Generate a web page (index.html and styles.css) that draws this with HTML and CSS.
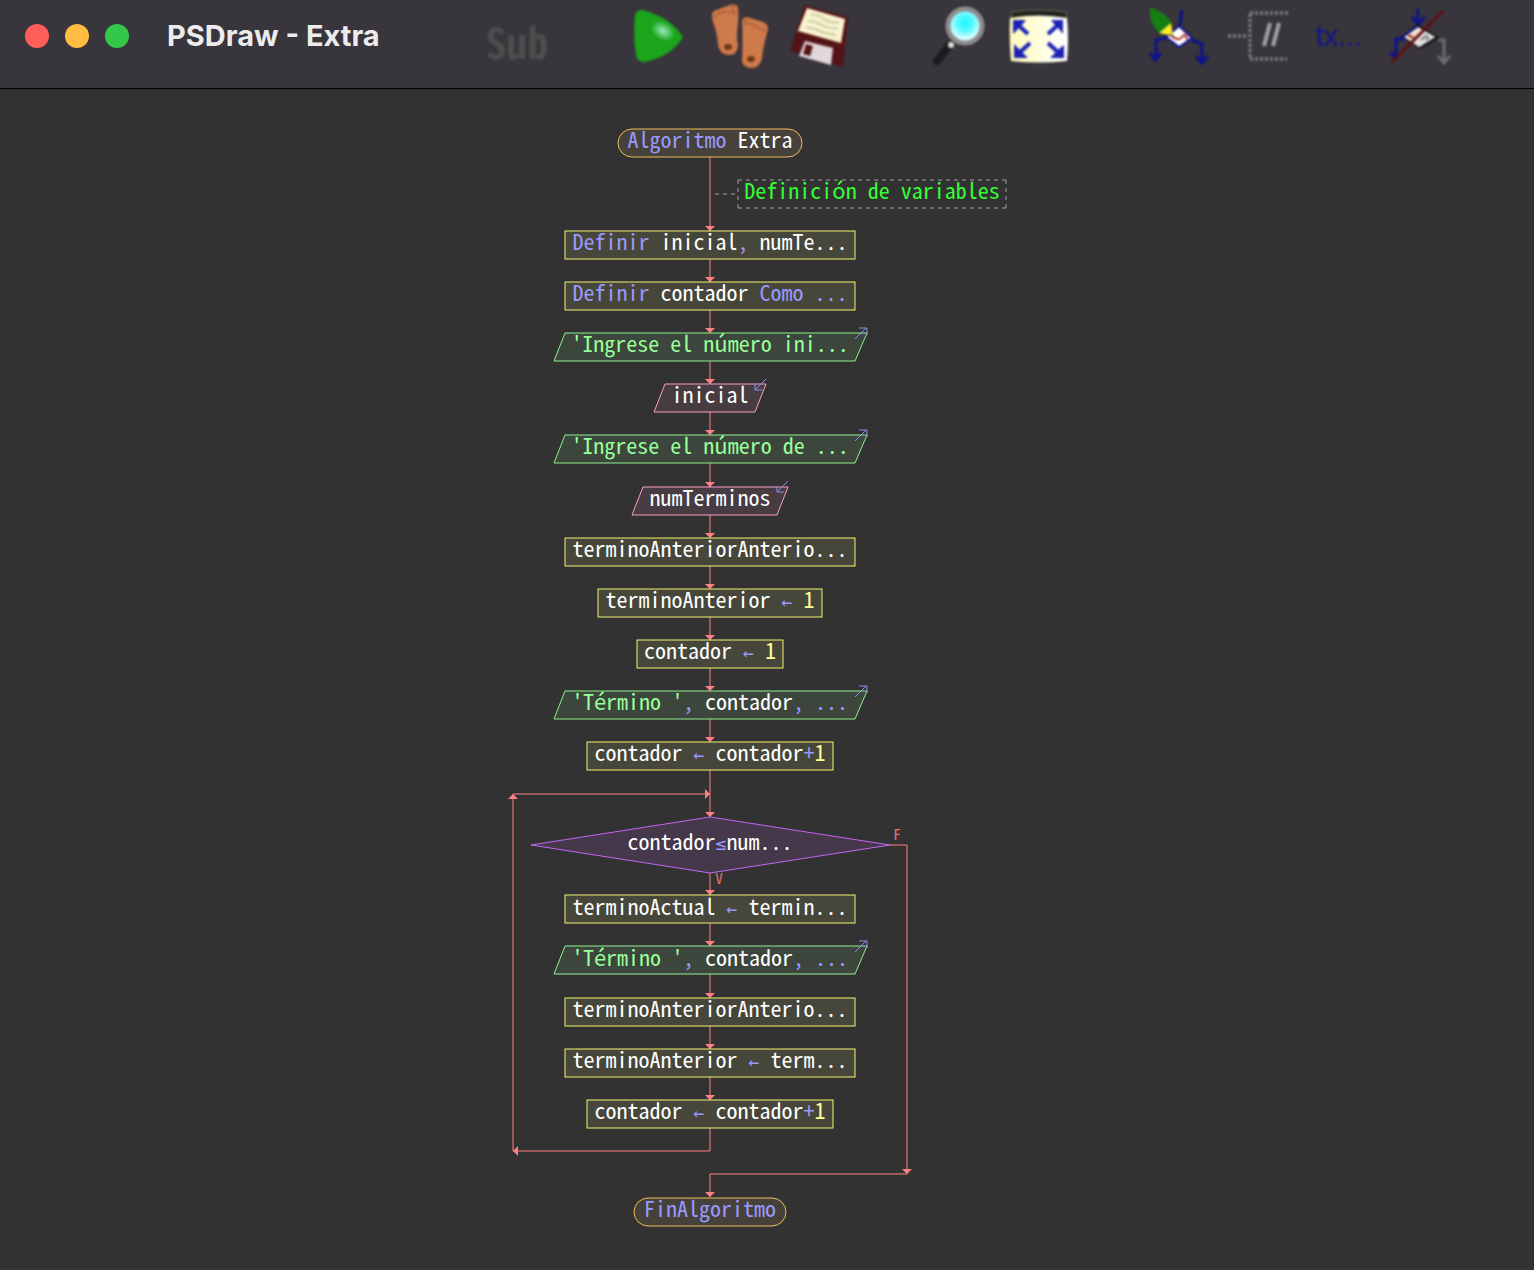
FILE: index.html
```html
<!DOCTYPE html>
<html lang="es">
<head>
<meta charset="utf-8">
<title>PSDraw - Extra</title>
<link rel="stylesheet" href="styles.css">
</head>
<body>
<header class="titlebar">
  <div class="caption">
    <span class="light close"></span>
    <span class="light minimize"></span>
    <span class="light expand"></span>
    <h1 class="title">PSDraw - Extra</h1>
  </div>
  <nav class="toolbar">
    <div class="group">
      <button class="tool tool-sub" type="button">Sub</button>
    </div>
    <div class="group">
      <button class="tool" type="button" aria-label="Ejecutar">
        <svg class="icon" viewBox="0 0 80 80">
          <defs><radialGradient id="shine"><stop offset="0" stop-color="#98ecc0"/><stop offset="1" stop-color="#1ba51b"/></radialGradient></defs>
          <path fill="#1ba51b" d="M18 16Q19 9 26 10Q54 18 66 37Q54 57 27 62Q20 62 19 55Q16 36 18 16Z"/>
          <ellipse cx="46" cy="31" rx="13" ry="9" transform="rotate(30 46 31)" fill="url(#shine)"/>
        </svg>
      </button>
      <button class="tool" type="button" aria-label="Paso a paso">
        <svg class="icon" viewBox="0 0 80 80">
          <g fill="#cf7a4a">
            <path d="M15 17Q14 11 20 10Q26 7 33 5Q38 3 41 7Q42 16 41 25Q39 35 41 45Q41 55 31 55Q22 54 21 44Q20 32 16 22Z"/>
            <path d="M45 21Q47 15 53 18L63 21Q72 23 71 30Q67 42 65 58Q63 68 54 68Q45 67 45 60Q46 40 45 21Z"/>
          </g>
          <path fill="none" stroke="#a05a36" stroke-width="2" stroke-dasharray="3 2" d="M17 17Q22 12 28 12T39 13M47 24Q52 23 58 26T70 32M36 5V12M49 19V23"/>
          <ellipse cx="31" cy="47" rx="4" ry="3" fill="#713716"/><ellipse cx="54" cy="59" rx="4" ry="3" fill="#713716"/>
        </svg>
      </button>
      <button class="tool" type="button" aria-label="Guardar">
        <svg class="icon" viewBox="0 0 80 80">
          <path fill="#541417" d="M28 5L71 17L66 67L13 51Z"/>
          <path fill="#fbf2cf" d="M30 8L68 19L64 43L21 31Z"/>
          <path fill="none" stroke="#c3cfa4" stroke-width="2" d="M34 15Q40 14 47 19T62 22M31 21Q38 21 45 25T61 28M29 27Q37 28 43 31T59 35"/>
          <path fill="#e0d8dc" d="M28 41L56 48L54 65L22 56Z"/>
          <path fill="#541417" d="M29 44L36 46L33 56L26 54Z"/>
        </svg>
      </button>
    </div>
    <div class="group">
      <button class="tool" type="button" aria-label="Zoom">
        <svg class="icon" viewBox="0 0 80 80">
          <defs><radialGradient id="lens" cy="0.4"><stop offset="0" stop-color="#20f4ff"/><stop offset="0.5" stop-color="#5cfaff"/><stop offset="1" stop-color="#e6ffff"/></radialGradient></defs>
          <path stroke="#1b1b1b" stroke-width="8" stroke-linecap="round" d="M32 46L20 61"/>
          <circle cx="48" cy="26" r="17" fill="url(#lens)" stroke="#8e8e8e" stroke-width="5"/>
          <circle cx="34" cy="45" r="3" fill="#e0e0e0"/>
        </svg>
      </button>
      <button class="tool" type="button" aria-label="Ajustar a la ventana">
        <svg class="icon" viewBox="0 0 80 80">
          <defs><linearGradient id="paper"><stop offset="0" stop-color="#fffbb8"/><stop offset="1" stop-color="#fff"/></linearGradient></defs>
          <path fill="#23231f" stroke="#6f6d52" d="M15 12Q42 8 69 12L70 20H14Z"/>
          <path fill="url(#paper)" d="M13 18Q42 13 70 18Q72 40 70 61Q42 64 14 61Q12 40 13 18Z"/>
          <g fill="#1c22b4" stroke="#1c22b4" stroke-width="4">
            <path d="M31 34L20 24M51 34L62 24M33 43L21 54M51 43L63 54"/>
            <path stroke="none" d="M16 20H29L25 25L21 29L16 34ZM66 20H54L58 25L62 29L66 34ZM17 58V44L22 49L26 53L31 58ZM67 58V45L62 49L58 53L53 58Z"/>
          </g>
        </svg>
      </button>
    </div>
    <div class="group">
      <button class="tool" type="button" aria-label="Editar diagrama">
        <svg class="icon" viewBox="0 0 80 80">
          <path fill="none" stroke="#0c1290" stroke-width="3" d="M45 10L43 25M29 38L19 40V58M55 40L65 44V62M13 53L18 60L24 53M59 56L65 63L71 56"/>
          <path fill="#fff" stroke="#0c1290" stroke-width="2" d="M42 26L55 38L42 47L29 37Z"/>
          <path fill="none" stroke="#b02525" stroke-width="2" d="M35 36Q41 42 45 37T50 40"/>
          <path fill="#148014" d="M13 7Q30 13 35 24L22 33Q11 22 13 7Z"/>
          <path fill="#fdf028" d="M22 33L34 23L36 36Z"/><path fill="#4a3000" d="M32 33L38 37L34 37Z"/>
        </svg>
      </button>
      <button class="tool" type="button" aria-label="Mostrar comentarios">
        <svg class="icon" viewBox="0 0 80 80">
          <path fill="none" stroke="#858585" stroke-width="3" stroke-dasharray="3 2" d="M11 36H31M33 13H71M33 14V59M33 59H70"/>
          <path stroke="#a2a2a2" stroke-width="4" d="M47 46L53 23M56 46L62 23"/>
        </svg>
      </button>
      <button class="tool tool-text" type="button">tx...</button>
      <button class="tool" type="button" aria-label="Estilo de diagrama">
        <svg class="icon" viewBox="0 0 80 80">
          <path fill="none" stroke="#0c1290" stroke-width="3" d="M41 9V24M35 17L41 24L48 17M26 39H19V56M13 52L18 58"/>
          <path fill="none" stroke="#6c6c6c" stroke-width="3" d="M61 40H67V62M61 56L67 63L73 56"/>
          <path fill="#16161c" d="M41 24L63 38L43 49L24 37Z"/>
          <path fill="#f1e3cf" d="M41 27L58 37L42 47L27 37Z"/>
          <path fill="#e2e2e2" d="M45 30L58 37L42 47L38 43Z"/>
          <path fill="none" stroke="#77777a" stroke-width="2" d="M44 40L50 35M49 40L52 37"/>
          <path fill="none" stroke="#0c1290" stroke-width="2" d="M41 26L25 37L29 40"/>
          <path fill="none" stroke="#9a3828" stroke-width="2" d="M31 35L37 38"/>
          <path stroke="#650d12" stroke-width="3" d="M15 62L66 11"/>
        </svg>
      </button>
    </div>
  </nav>
</header>

<main class="canvas">
  <svg class="chart" width="734" height="1176" viewBox="-310 0 734 1176">
    <defs>
      <marker id="head" markerUnits="userSpaceOnUse" markerWidth="5" markerHeight="10" refX="5" refY="5" orient="auto">
        <path class="head" d="M0 0L5 5L0 10Z"/>
      </marker>
      <path id="out" class="io" d="M0 12L11 1M4 1H12V8"/>
      <path id="in" class="io" d="M12 0L1 11M1 5V11H8"/>
    </defs>

    <!-- connectors of the main trunk -->
    <g class="flow">
      <path d="M0 68V142"/><path d="M0 170V193"/><path d="M0 221V244"/><path d="M0 272V295"/>
      <path d="M0 323V346"/><path d="M0 374V398"/><path d="M0 426V449"/><path d="M0 477V500"/>
      <path d="M0 528V551"/><path d="M0 579V602"/><path d="M0 630V653"/><path d="M0 681V728"/>
    </g>
    <!-- loop body, way back and way out -->
    <g class="flow">
      <path d="M0 784V806"/><path d="M0 834V857"/><path d="M0 885V909"/><path d="M0 937V960"/><path d="M0 988V1011"/>
      <path d="M0 1039V1062H-197"/><path d="M-197 1062V705"/><path d="M-197 705H0"/>
      <path d="M180 756H197V1085"/><path d="M197 1085H0V1108"/>
    </g>

    <rect class="limit" x="-92" y="40" width="184" height="28" rx="14"/>
    <text class="code" x="0" y="59"><tspan class="kw">Algoritmo</tspan> Extra</text>

    <path class="note" d="M5 105H28M28 91H296M28 91V119M28 119H296M296 91V119"/>
    <text class="code remark" x="162" y="110">Definición de variables</text>

    <rect class="step" x="-145" y="142" width="290" height="28"/>
    <text class="code" x="0" y="161"><tspan class="kw">Definir</tspan> inicial<tspan class="kw">,</tspan> numTe...</text>

    <rect class="step" x="-145" y="193" width="290" height="28"/>
    <text class="code" x="0" y="212"><tspan class="kw">Definir</tspan> contador <tspan class="kw">Como ...</tspan></text>

    <path class="write" d="M-145 244H157L145 272H-156Z"/><use href="#out" x="145" y="238"/>
    <text class="code str" x="0" y="263">'Ingrese el número ini...</text>

    <path class="read" d="M-45 295H56L45 323H-56Z"/><use href="#in" x="44" y="290"/>
    <text class="code" x="0" y="314">inicial</text>

    <path class="write" d="M-145 346H157L145 374H-156Z"/><use href="#out" x="145" y="340"/>
    <text class="code str" x="0" y="365">'Ingrese el número de ...</text>

    <path class="read" d="M-67 398H78L67 426H-78Z"/><use href="#in" x="66" y="392"/>
    <text class="code" x="0" y="417">numTerminos</text>

    <rect class="step" x="-145" y="449" width="290" height="28"/>
    <text class="code" x="0" y="468">terminoAnteriorAnterio...</text>

    <rect class="step" x="-112" y="500" width="224" height="28"/>
    <text class="code" x="0" y="519">terminoAnterior <tspan class="op">←</tspan> <tspan class="num">1</tspan></text>

    <rect class="step" x="-73" y="551" width="146" height="28"/>
    <text class="code" x="0" y="570">contador <tspan class="op">←</tspan> <tspan class="num">1</tspan></text>

    <path class="write" d="M-145 602H157L145 630H-156Z"/><use href="#out" x="145" y="596"/>
    <text class="code" x="0" y="621"><tspan class="str">'Término '</tspan><tspan class="kw">,</tspan> contador<tspan class="kw">, ...</tspan></text>

    <rect class="step" x="-123" y="653" width="246" height="28"/>
    <text class="code" x="0" y="672">contador <tspan class="op">←</tspan> contador<tspan class="kw">+</tspan><tspan class="num">1</tspan></text>

    <path class="test" d="M-179 756L0 728L180 756L0 784Z"/>
    <text class="code" x="0" y="761">contador<tspan class="op">≤</tspan>num...</text>
    <text class="branch" x="187" y="751">F</text>
    <text class="branch" x="9" y="795">V</text>

    <rect class="step" x="-145" y="806" width="290" height="28"/>
    <text class="code" x="0" y="826">terminoActual <tspan class="op">←</tspan> termin...</text>

    <path class="write" d="M-145 857H157L145 885H-156Z"/><use href="#out" x="145" y="851"/>
    <text class="code" x="0" y="877"><tspan class="str">'Término '</tspan><tspan class="kw">,</tspan> contador<tspan class="kw">, ...</tspan></text>

    <rect class="step" x="-145" y="909" width="290" height="28"/>
    <text class="code" x="0" y="928">terminoAnteriorAnterio...</text>

    <rect class="step" x="-145" y="960" width="290" height="28"/>
    <text class="code" x="0" y="979">terminoAnterior <tspan class="op">←</tspan> term...</text>

    <rect class="step" x="-123" y="1011" width="246" height="28"/>
    <text class="code" x="0" y="1030">contador <tspan class="op">←</tspan> contador<tspan class="kw">+</tspan><tspan class="num">1</tspan></text>

    <rect class="limit" x="-76" y="1109" width="152" height="28" rx="14"/>
    <text class="code kw" x="0" y="1128">FinAlgoritmo</text>
  </svg>
</main>
</body>
</html>
```

FILE: styles.css
```css
* { box-sizing: border-box; }

body {
  margin: 0;
  min-height: 100vh;
  display: flex;
  flex-direction: column;
  background: #323232;
  font-family: Inter, "Liberation Sans", sans-serif;
}

.titlebar {
  display: flex;
  height: 89px;
  background: #38353c;
  border-bottom: 1px solid #000;
}

.caption {
  flex: none;
  width: 477px;
  height: 72px;
  padding-left: 25px;
  display: flex;
  align-items: center;
  gap: 16px;
}

.light {
  width: 24px;
  height: 24px;
  border-radius: 50%;
}
.close { background: #ff5f5a; }
.minimize { background: #ffbc40; }
.expand { background: #34c84a; }

.title {
  margin: 0 0 0 22px;
  font-size: 29px;
  line-height: 36px;
  font-weight: 700;
  color: #ececec;
}

.toolbar {
  display: flex;
  gap: 60px;
}
.group { display: flex; }

.tool {
  width: 80px;
  height: 80px;
  padding: 0;
  border: 0;
  background: none;
  display: flex;
  align-items: center;
  justify-content: center;
  font-family: "Liberation Sans", sans-serif;
}
.icon {
  width: 80px;
  height: 80px;
  filter: blur(1px);
}
.tool-sub {
  font-family: "Noto Sans Mono CJK SC", "Liberation Sans", sans-serif;
  font-size: 42px;
  font-weight: 700;
  color: #4d4d4d;
  filter: blur(1px);
}
.tool-text {
  font-size: 29px;
  padding: 0 0 8px 4px;
  color: #101490;
  filter: blur(1px);
}

.canvas {
  flex: 1;
  display: flex;
  justify-content: center;
  border-bottom: 2px solid #373438;
}
.chart { display: block; flex: none; }

.flow path {
  fill: none;
  stroke: #ff8080;
  marker-end: url(#head);
}
.head { fill: #ff8080; }

.limit { fill: #46413a; stroke: #f0bb58; }
.step { fill: #46463a; stroke: #f4f470; }
.write { fill: #3c463c; stroke: #90f090; }
.read { fill: #463c42; stroke: #ff9cc8; }
.test { fill: #44384a; stroke: #c466f4; }
.io { fill: none; stroke: #8c8cf0; }
.note { fill: none; stroke: #a0a0a0; stroke-dasharray: 4 4; }

.code {
  font-family: "Noto Sans Mono CJK SC", "Liberation Mono", monospace;
  font-size: 22px;
  text-anchor: middle;
  fill: #fff;
}
.kw { fill: #9999ff; }
.str { fill: #99ff99; }
.num { fill: #ffff99; }
.remark { fill: #33ff33; }
.op {
  font-family: "DejaVu Sans Mono", monospace;
  font-size: 18px;
  fill: #9999ff;
}

.branch {
  font-family: "Noto Sans Mono CJK SC", "Liberation Mono", monospace;
  font-size: 15px;
  text-anchor: middle;
  fill: #e07474;
}
```
